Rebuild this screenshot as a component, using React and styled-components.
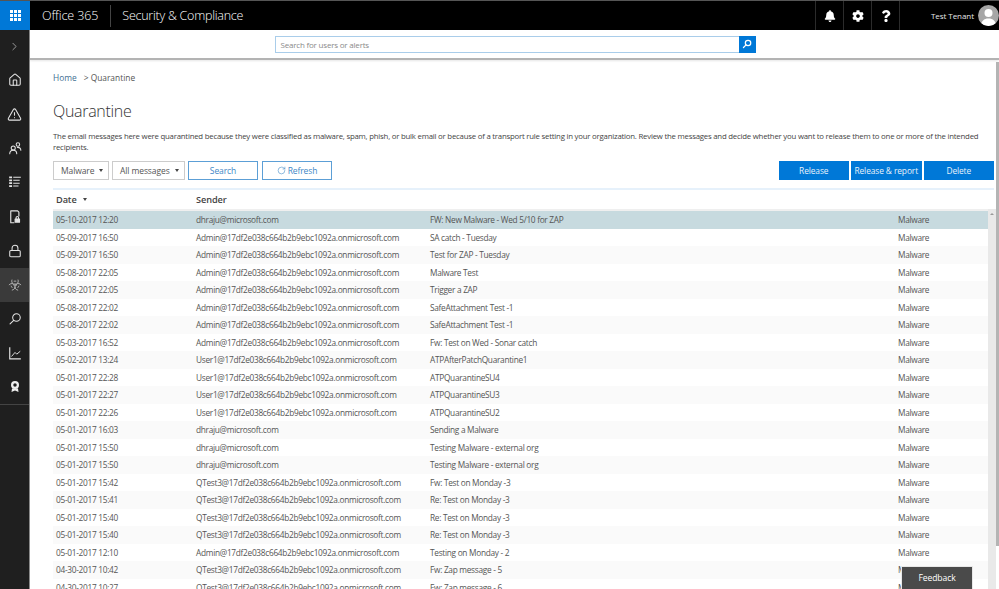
import React from 'react'
import styled, { createGlobalStyle } from 'styled-components'
import { Biohazard, ChevronRight, House, TriangleAlert, Lock, RotateCw } from 'lucide-react'
import { FaBell, FaCog, FaQuestion } from 'react-icons/fa'

const GlobalStyle = createGlobalStyle`
  html, body { margin: 0; padding: 0; height: 100%; overflow: hidden; background: #fff; }
  body { font-family: "Open Sans", "Noto Sans", "Liberation Sans", sans-serif; color: #333; }
  * { box-sizing: border-box; }
`

const Page = styled.div`
  position: relative;
  display: flex;
  flex-direction: column;
  width: 999px;
  height: 589px;
  overflow: hidden;
`

const TopBar = styled.header`
  display: flex;
  align-items: center;
  flex: none;
  height: 30px;
  background: #000;
  color: #fff;
  border-top: 1px solid #555;
`

const Waffle = styled.div`
  display: grid;
  grid-template-columns: repeat(3, 3px);
  gap: 1px;
  place-content: center;
  width: 30px;
  height: 100%;
  background: #0078d7;
  i { width: 3px; height: 3px; background: #fff; }
`

const Brand = styled.div`
  font-size: 12.5px;
  font-weight: 300;
  margin-left: 12px;
  padding-right: 12px;
  border-right: 1px solid #444;
  line-height: 22px;
  letter-spacing: -0.1px;
`

const Product = styled.div`
  font-size: 12.5px;
  font-weight: 300;
  margin-left: 11px;
  flex: 1;
  letter-spacing: -0.25px;
`

const TopIcon = styled.div`
  display: flex;
  align-items: center;
  justify-content: center;
  width: 28px;
  height: 100%;
  border-left: 1px solid #2b2b2b;
  font-size: 12px;
`

const UserBox = styled.div`
  display: flex;
  align-items: center;
  justify-content: flex-end;
  width: 100px;
  height: 100%;
  border-left: 1px solid #2b2b2b;
  font-size: 8px;
  gap: 4px;
  letter-spacing: -0.05px;
  color: #e6e6e6;
`

const Avatar = styled.div`
  width: 21px;
  height: 21px;
  border-radius: 50%;
  overflow: hidden;
  background: #a6a6a6;
  flex: none;
`

const Body = styled.div`
  display: flex;
  flex: 1;
  min-height: 0;
`

const Sidebar = styled.nav`
  display: flex;
  flex-direction: column;
  flex: none;
  width: 30px;
  background: #1f1f1f;
  border-right: 1px solid #8a8a8a;
`

const NavItem = styled.div`
  display: flex;
  align-items: center;
  justify-content: center;
  height: 34.1px;
  flex: none;
  color: #e4e4e4;
  background: ${p => (p.$active ? '#3a3a3a' : 'transparent')};
  &:first-child { margin-top: -1px; }
`

const NavRule = styled.div`
  height: 1px;
  background: #444;
`

const Main = styled.main`
  display: flex;
  flex-direction: column;
  flex: 1;
  min-width: 0;
`

const SearchStrip = styled.div`
  display: flex;
  justify-content: center;
  align-items: center;
  flex: none;
  height: 30px;
  padding-left: 1px;
  border-bottom: 2px solid #b3b3b3;
  box-shadow: 0 1px 2px rgba(0, 0, 0, 0.1);
`

const SearchBox = styled.div`
  display: flex;
  width: 481px;
  height: 17px;
  border: 1px solid #a9cdea;
  font-size: 8px;
  letter-spacing: -0.2px;
  color: #8a8a8a;
  align-items: center;
  padding-left: 5px;
`

const SearchText = styled.span`
  flex: 1;
`

const SearchBtn = styled.div`
  display: flex;
  align-items: center;
  justify-content: center;
  width: 17px;
  height: 17px;
  margin-right: -1px;
  background: #0078d7;
  color: #fff;
`

const Content = styled.div`
  display: flex;
  flex-direction: column;
  flex: 1;
  min-height: 0;
  padding: 12px 5px 0 23px;
`

const Crumbs = styled.div`
  font-size: 8.4px;
  color: #555;
  line-height: 12px;
`

const CrumbLink = styled.span`
  color: #3f6f93;
  margin-right: 7px;
`

const Title = styled.h1`
  margin: 16px 0 0;
  font-size: 16px;
  font-weight: 300;
  line-height: 22px;
  letter-spacing: -0.3px;
  color: #333;
`

const Blurb = styled.p`
  margin: 9px 0 0;
  font-size: 7.8px;
  font-weight: 500;
  line-height: 11px;
  letter-spacing: -0.22px;
  color: #444;
`

const Toolbar = styled.div`
  display: flex;
  align-items: center;
  margin-top: 7px;
  gap: 3px;
  height: 20px;
  flex: none;
`

const Select = styled.div`
  display: flex;
  align-items: center;
  justify-content: space-between;
  width: ${p => p.$w}px;
  height: 19px;
  padding: 0 5px 0 7px;
  border: 1px solid #ccc;
  font-size: 8.5px;
  letter-spacing: -0.1px;
  color: #555;
  &::after {
    content: "";
    border-left: 2.5px solid transparent;
    border-right: 2.5px solid transparent;
    border-top: 3px solid #444;
  }
`

const GhostBtn = styled.div`
  display: flex;
  align-items: center;
  justify-content: center;
  gap: 2px;
  width: 70px;
  height: 19px;
  margin-right: ${p => p.$mr || 0}px;
  border: 1px solid #5c9fd6;
  color: #3d87c6;
  font-size: 8.5px;
  letter-spacing: -0.1px;
`

const Spacer = styled.div`
  flex: 1;
`

const ActionGroup = styled.div`
  display: flex;
  gap: 2px;
`

const SolidBtn = styled.div`
  display: flex;
  align-items: center;
  justify-content: center;
  width: 70.5px;
  height: 19px;
  background: #0078d7;
  color: #e8f2fb;
  font-size: 8.4px;
  letter-spacing: -0.1px;
`

const Rule = styled.div`
  flex: none;
  height: 2px;
  margin: 8px 0 0;
  background: #e6f1fb;
`

const TableWrap = styled.div`
  position: relative;
  flex: 1;
  min-height: 0;
`

const HeadRow = styled.div`
  display: grid;
  grid-template-columns: 140px 234px 468px 1fr;
  align-items: center;
  height: 21px;
  padding-left: 3px;
  border-bottom: 2px solid #efefef;
  font-size: 9.2px;
  font-weight: 600;
  letter-spacing: -0.1px;
  color: #444;
`

const HeadCell = styled.div`
  display: flex;
  align-items: center;
  gap: 6px;
  &.sorted::after {
    content: "";
    border-left: 2.5px solid transparent;
    border-right: 2.5px solid transparent;
    border-top: 3px solid #444;
  }
`

const Row = styled.div`
  display: grid;
  grid-template-columns: 140px 234px 468px 1fr;
  align-items: center;
  height: 17.5px;
  margin-right: 6px;
  padding-left: 3px;
  font-size: 8.3px;
  letter-spacing: -0.29px;
  color: #555;
  white-space: nowrap;
  background: ${p => (p.$selected ? '#c7dadf' : p.$odd ? '#fff' : '#fafafa')};
`

const ScrollTrack = styled.div`
  position: absolute;
  top: 19px;
  right: -2px;
  bottom: 0;
  width: 8px;
  background: #e9e9e9;
`

const ScrollUp = styled.div`
  position: absolute;
  top: 4px;
  left: 2px;
  border-left: 2px solid transparent;
  border-right: 2px solid transparent;
  border-bottom: 2px solid #9a9a9a;
`

const PageScroll = styled.div`
  position: absolute;
  top: 62px;
  right: 0;
  width: 3px;
  height: 484px;
  background: #b4b4b4;
`

const Feedback = styled.div`
  position: absolute;
  right: 26px;
  bottom: 0;
  display: flex;
  align-items: center;
  justify-content: center;
  width: 72px;
  height: 23px;
  background: #4a4a4a;
  border: 1px solid #e8e8e8;
  border-bottom: 0;
  color: #fff;
  font-size: 8.6px;
  letter-spacing: -0.1px;
`

const tenant = '17df2e038c664b2b9ebc1092a.onmicrosoft.com'
const rows = [
  ['05-10-2017 12:20', 'dhraju@microsoft.com', 'FW: New Malware - Wed 5/10 for ZAP'],
  ['05-09-2017 16:50', `Admin@${tenant}`, 'SA catch - Tuesday'],
  ['05-09-2017 16:50', `Admin@${tenant}`, 'Test for ZAP - Tuesday'],
  ['05-08-2017 22:05', `Admin@${tenant}`, 'Malware Test'],
  ['05-08-2017 22:05', `Admin@${tenant}`, 'Trigger a ZAP'],
  ['05-08-2017 22:02', `Admin@${tenant}`, 'SafeAttachment Test -1'],
  ['05-08-2017 22:02', `Admin@${tenant}`, 'SafeAttachment Test -1'],
  ['05-03-2017 16:52', `Admin@${tenant}`, 'Fw: Test on Wed - Sonar catch'],
  ['05-02-2017 13:24', `User1@${tenant}`, 'ATPAfterPatchQuarantine1'],
  ['05-01-2017 22:28', `User1@${tenant}`, 'ATPQuarantineSU4'],
  ['05-01-2017 22:27', `User1@${tenant}`, 'ATPQuarantineSU3'],
  ['05-01-2017 22:26', `User1@${tenant}`, 'ATPQuarantineSU2'],
  ['05-01-2017 16:03', 'dhraju@microsoft.com', 'Sending a Malware'],
  ['05-01-2017 15:50', 'dhraju@microsoft.com', 'Testing Malware - external org'],
  ['05-01-2017 15:50', 'dhraju@microsoft.com', 'Testing Malware - external org'],
  ['05-01-2017 15:42', `QTest3@${tenant}`, 'Fw: Test on Monday -3'],
  ['05-01-2017 15:41', `QTest3@${tenant}`, 'Re: Test on Monday -3'],
  ['05-01-2017 15:40', `QTest3@${tenant}`, 'Re: Test on Monday -3'],
  ['05-01-2017 15:40', `QTest3@${tenant}`, 'Re: Test on Monday -3'],
  ['05-01-2017 12:10', `Admin@${tenant}`, 'Testing on Monday - 2'],
  ['04-30-2017 10:42', `QTest3@${tenant}`, 'Fw: Zap message - 5'],
  ['04-30-2017 10:27', `QTest3@${tenant}`, 'Fw: Zap message - 6'],
]

const Svg = ({ children, size = 14 }) => (
  <svg width={size} height={size} viewBox="0 0 24 24" fill="none" stroke="currentColor" strokeWidth="1.8" strokeLinecap="round" strokeLinejoin="round">
    {children}
  </svg>
)

const FlippedSearch = ({ size = 14, sw = 2 }) => (
  <svg width={size} height={size} viewBox="0 0 24 24" fill="none" stroke="currentColor" strokeWidth={sw} strokeLinecap="round">
    <circle cx="14.5" cy="9.5" r="6.5" />
    <path d="M9.8 14.2 3.5 20.5" />
  </svg>
)

const navIcons = [
  <ChevronRight size={13} strokeWidth={1.6} color="#aaa" />,
  <House size={14} strokeWidth={1.8} />,
  <TriangleAlert size={15} strokeWidth={1.7} />,
  <Svg size={14}>
    <circle cx="9" cy="12" r="3.5" />
    <path d="M3 22c0-4 2.5-6 6-6s6 2 6 6" />
    <circle cx="17" cy="6" r="3" />
    <path d="M16 11c3.5-.5 6 1.5 6 5" />
  </Svg>,
  <svg width="14" height="14" viewBox="0 0 24 24" fill="none" stroke="currentColor">
    <path d="M2 4h5M2 9h5M2 14h5M2 19h5" strokeWidth="3" />
    <path d="M9 4h13M9 9h11M9 14h11M9 19h9" strokeWidth="1.8" />
  </svg>,
  <Svg size={15}>
    <path d="M11 22H6V3h11l2 2v6" />
    <rect x="13" y="16" width="7" height="5" fill="currentColor" />
    <path d="M14.5 16v-2a2 2 0 0 1 4 0v2" />
  </Svg>,
  <Lock size={14} strokeWidth={1.8} />,
  <Biohazard size={14} strokeWidth={1.5} color="#bbb" />,
  <FlippedSearch size={14} sw={1.8} />,
  <svg width="14" height="14" viewBox="0 0 24 24" fill="none" stroke="currentColor" strokeWidth="2">
    <path d="M3 2v20h19" />
    <path d="M6 18l6-7 3 3 6-5" strokeWidth="1.6" />
  </svg>,
  <svg width="12" height="13" viewBox="0 0 24 24" fill="#eee">
    <path d="M12 1a8 8 0 1 1 0 16 8 8 0 0 1 0-16zm0 4.5a3.5 3.5 0 1 0 0 7 3.5 3.5 0 0 0 0-7z" fillRule="evenodd" />
    <path d="M6 16l-1 7 7-3 7 3-1-7z" />
  </svg>,
]

const App = () => {
  return (
    <Page>
      <GlobalStyle />
      <TopBar>
        <Waffle>
          {Array.from({ length: 9 }, (_, i) => <i key={i} />)}
        </Waffle>
        <Brand>Office 365</Brand>
        <Product>Security &amp; Compliance</Product>
        <TopIcon><FaBell /></TopIcon>
        <TopIcon><FaCog /></TopIcon>
        <TopIcon><FaQuestion /></TopIcon>
        <UserBox>
          Test Tenant
          <Avatar>
            <svg width="21" height="21" viewBox="0 0 21 21" fill="#fff">
              <circle cx="10.5" cy="8" r="4" />
              <path d="M3 21c0-5 3-7.5 7.5-7.5S18 16 18 21z" />
            </svg>
          </Avatar>
        </UserBox>
      </TopBar>
      <Body>
        <Sidebar>
          {navIcons.map((icon, i) => (
            <NavItem key={i} $active={i === 7}>{icon}</NavItem>
          ))}
          <NavRule />
        </Sidebar>
        <Main>
          <SearchStrip>
            <SearchBox>
              <SearchText>Search for users or alerts</SearchText>
              <SearchBtn><FlippedSearch size={10} sw={3} /></SearchBtn>
            </SearchBox>
          </SearchStrip>
          <Content>
            <Crumbs><CrumbLink>Home</CrumbLink>&gt; Quarantine</Crumbs>
            <Title>Quarantine</Title>
            <Blurb>
              The email messages here were quarantined because they were classified as malware, spam, phish, or bulk email or because of a transport rule setting in your organization. Review the messages and decide whether you want to release them to one or more of the intended recipients.
            </Blurb>
            <Toolbar>
              <Select $w={56}>Malware</Select>
              <Select $w={73}>All messages</Select>
              <GhostBtn $mr={1}>Search</GhostBtn>
              <GhostBtn><RotateCw size={9} strokeWidth={1.5} />Refresh</GhostBtn>
              <Spacer />
              <ActionGroup>
                <SolidBtn>Release</SolidBtn>
                <SolidBtn>Release &amp; report</SolidBtn>
                <SolidBtn>Delete</SolidBtn>
              </ActionGroup>
            </Toolbar>
            <Rule />
            <TableWrap>
              <HeadRow>
                <HeadCell className="sorted">Date</HeadCell>
                <HeadCell>Sender</HeadCell>
              </HeadRow>
              {rows.map((r, i) => (
                <Row key={i} $selected={i === 0} $odd={i % 2 === 1}>
                  <div>{r[0]}</div>
                  <div>{r[1]}</div>
                  <div>{r[2]}</div>
                  <div>Malware</div>
                </Row>
              ))}
              <ScrollTrack>
                <ScrollUp />
              </ScrollTrack>
            </TableWrap>
          </Content>
        </Main>
      </Body>
      <PageScroll />
      <Feedback>Feedback</Feedback>
    </Page>
  )
}

export default App
